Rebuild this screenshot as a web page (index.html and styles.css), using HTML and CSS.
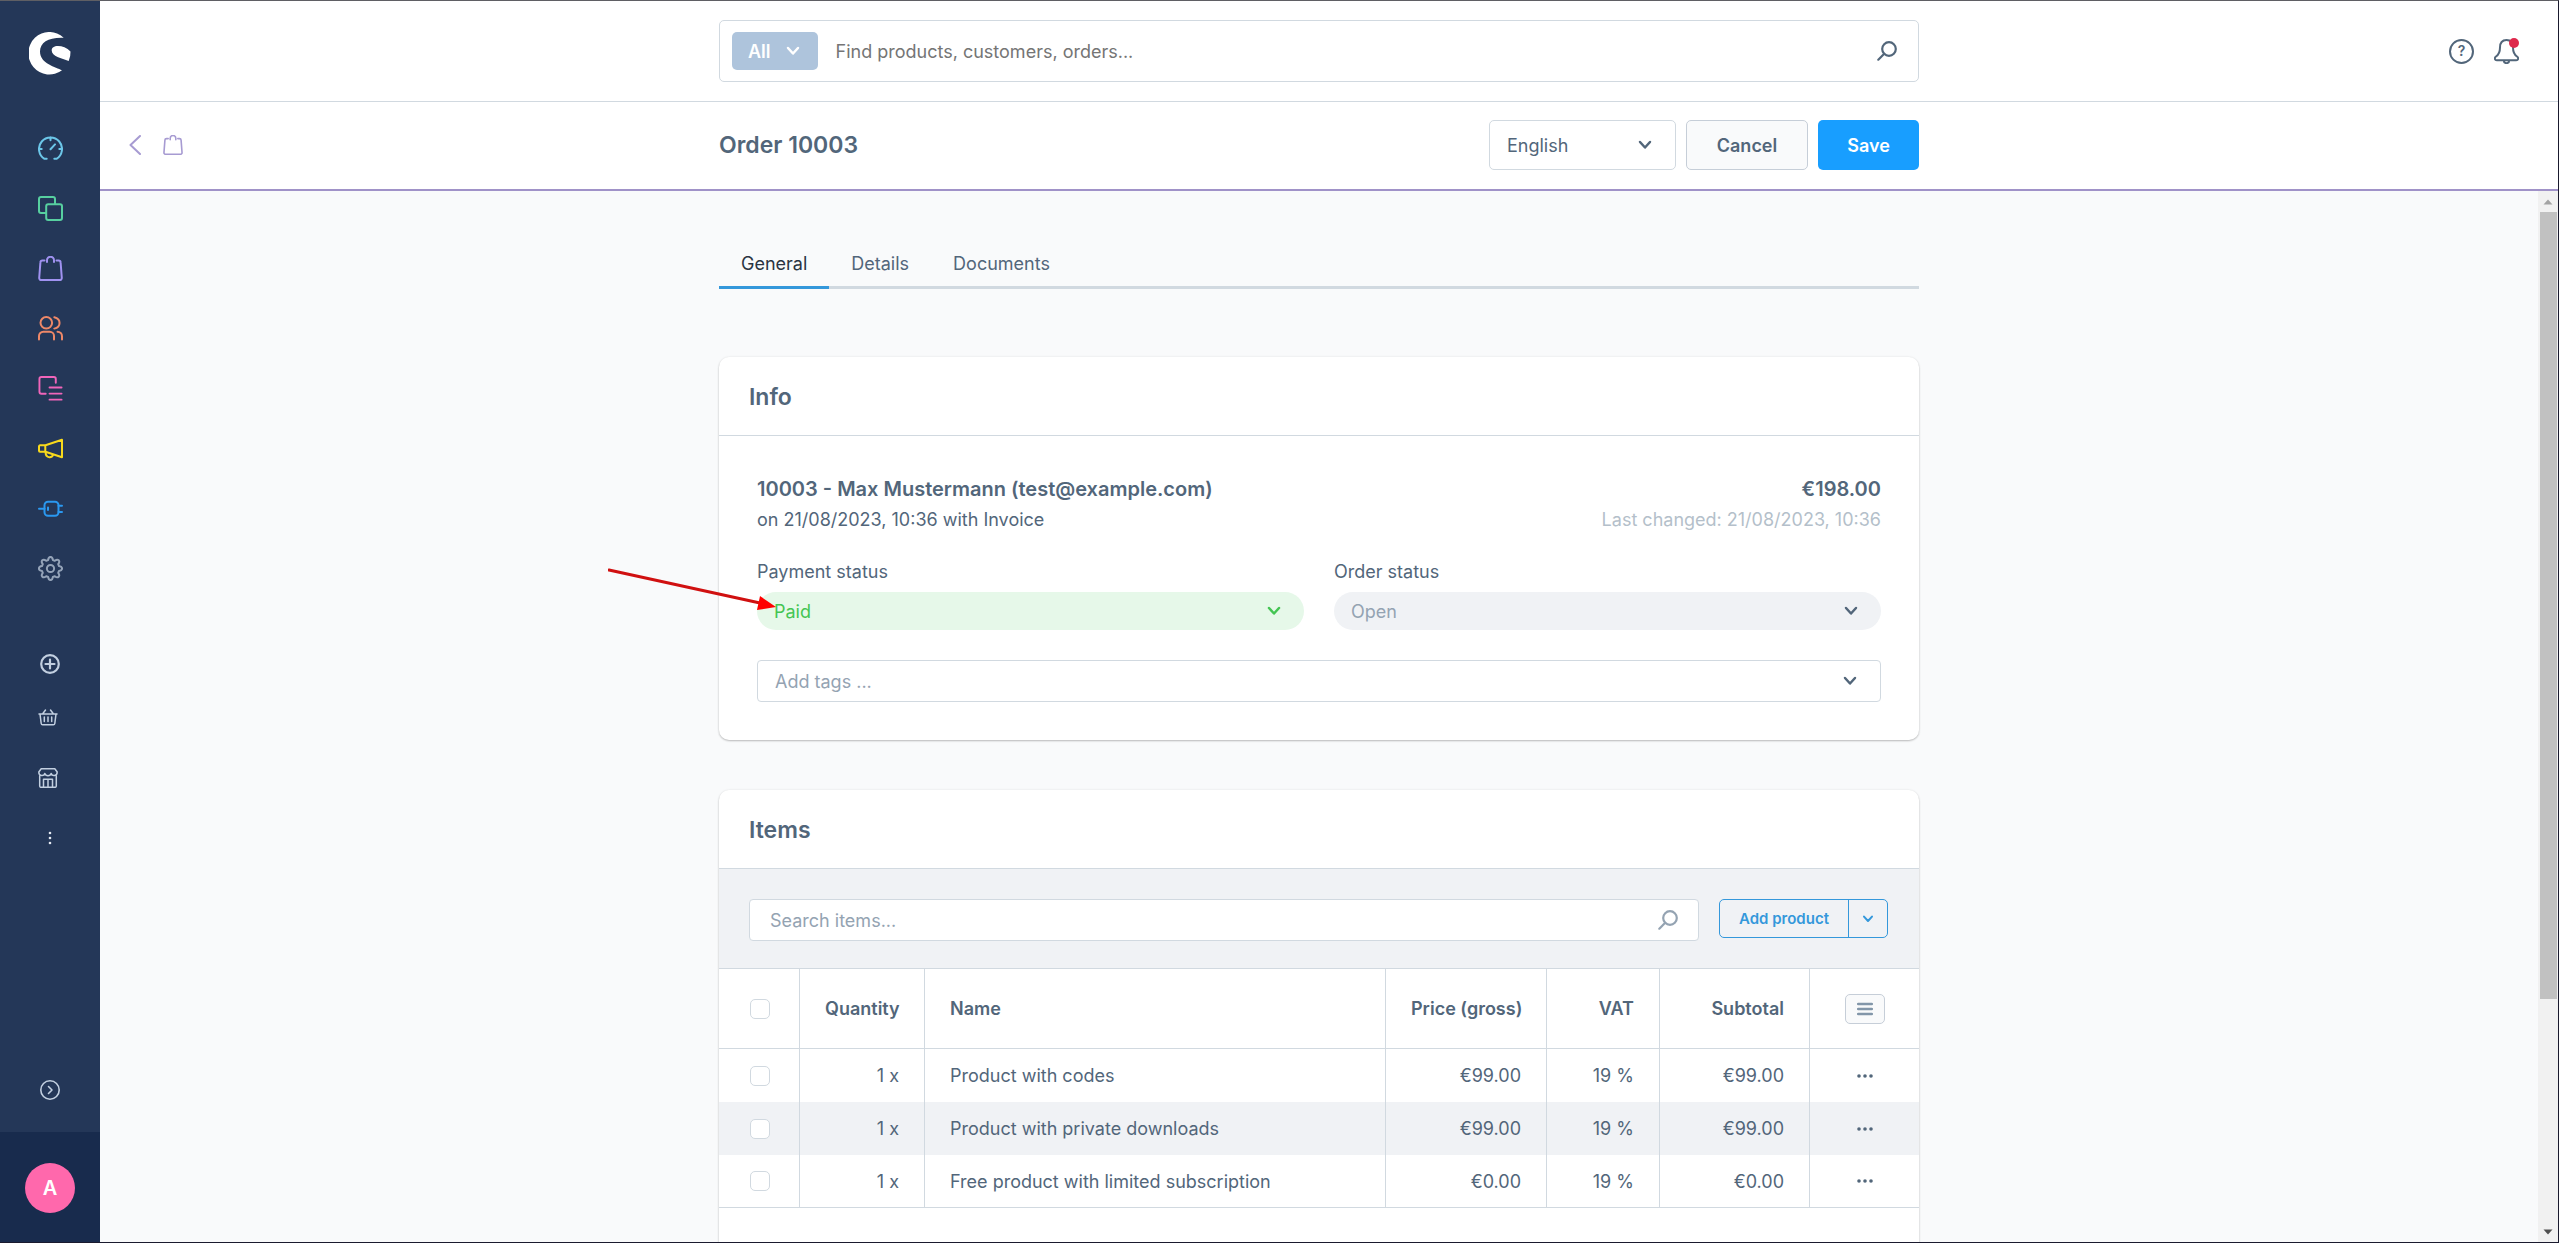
FILE: index.html
```html
<!DOCTYPE html>
<html lang="en">
<head>
    <meta charset="UTF-8">
    <meta name="viewport" content="width=device-width, initial-scale=1.0">
    <title>Order 10003</title>
    <link rel="stylesheet" href="styles.css">
</head>
<body>
    <!-- shared icons -->
    <svg class="sprite" aria-hidden="true">
        <symbol id="chevron" viewBox="0 0 14 10"><path d="M2 2l5 5.5L12 2"/></symbol>
        <symbol id="search" viewBox="0 0 20 20"><circle cx="12" cy="8" r="6.8"/><path d="M7.2 12.8L1.3 18.7"/></symbol>
        <symbol id="bag" viewBox="0 0 25 25"><path d="M6.5 4.5H4.4a2 2 0 0 0-2 1.9L1.2 22a2 2 0 0 0 2 2.1h18.6a2 2 0 0 0 2-2.1L22.6 6.4a2 2 0 0 0-2-1.9h-2.1M9 6V4.2a3.4 3.4 0 0 1 7 0V6"/></symbol>
        <symbol id="dots" viewBox="0 0 16 4"><circle cx="2" cy="2" r="1.8"/><circle cx="8" cy="2" r="1.8"/><circle cx="14" cy="2" r="1.8"/></symbol>
    </svg>

    <aside class="sidebar">
        <a class="logo" href="#" aria-label="Home">
            <svg viewBox="0 0 42 43"><path d="M34.7 5.7A21 21.3 0 1 0 33 38.3C27 35 11 32 11 19.5 11 10 20 5 34.7 5.7z"/><path d="M41.5 19.5C38 15.8 33 14 29 14c-4 0-6.3 1.5-6.3 4.5 0 6 10 7.5 17 10.5a21 21 0 0 0 1.8-9.5z"/></svg>
        </a>
        <nav class="menu">
            <a class="dashboard" href="#" aria-label="Dashboard"><svg viewBox="0 0 25 25"><path d="M8.7 22.8H6.5a11.5 11.5 0 1 1 12 0h-2.2M12.5 1.5v2.7M1 13h2.7M21.3 13H24M12.5 13.2L17 8.4"/></svg></a>
            <a class="catalogues" href="#" aria-label="Catalogues"><svg viewBox="0 0 25 25"><path d="M8 17H3a2 2 0 0 1-2-2V3a2 2 0 0 1 2-2h12a2 2 0 0 1 2 2v5"/><rect x="8.2" y="8.2" width="15.8" height="15.8" rx="2"/></svg></a>
            <a class="orders" href="#" aria-label="Orders"><svg><use href="#bag"/></svg></a>
            <a class="customers" href="#" aria-label="Customers"><svg viewBox="0 0 25 25"><circle cx="8.3" cy="6.8" r="5.8"/><path d="M16.3 1.2c7 1.8 7 9.6 0 11.4M1 23.5V20a4.3 4.3 0 0 1 4.3-4.3h6.4A4.3 4.3 0 0 1 16 20v3.5M19.5 15.7A4.5 4.5 0 0 1 24 20.2v3.3"/></svg></a>
            <a class="contents" href="#" aria-label="Content"><svg viewBox="0 0 25 26"><path d="M18 7V3a2 2 0 0 0-2-2H3a2 2 0 0 0-2 2v13.5a2 2 0 0 0 2 2h4.5M11.5 12H24M11.5 18.3H24M11.5 24.6H24"/></svg></a>
            <a class="marketing" href="#" aria-label="Marketing"><svg viewBox="0 0 25 25"><path d="M2 9.3h5.5L24 3.7v17.5L7.5 15.8H2a1 1 0 0 1-1-1v-4.5a1 1 0 0 1 1-1zM7.3 9.3v6.5M7.5 16.2c.3 6.5 7.3 6 7.5 2.2"/></svg></a>
            <a class="extensions" href="#" aria-label="Extensions"><svg viewBox="0 0 25 25"><path d="M1 12.8h5.5M20.5 9.7H24M20.5 16H24M10 11.6v2.4"/><rect x="6.5" y="5.8" width="14" height="14" rx="3.5"/></svg></a>
            <a class="settings" href="#" aria-label="Settings"><svg viewBox="-12.5 -12.5 25 25"><path d="M-2.4-8.5C-1.8-12.6 1.8-12.6 2.4-8.5L4.3-7.7C7.6-10.2 10.2-7.6 7.7-4.3L8.5-2.4C12.6-1.8 12.6 1.8 8.5 2.4L7.7 4.3C10.2 7.6 7.6 10.2 4.3 7.7L2.4 8.5C1.8 12.6-1.8 12.6-2.4 8.5L-4.3 7.7C-7.6 10.2-10.2 7.6-7.7 4.3L-8.5 2.4C-12.6 1.8-12.6-1.8-8.5-2.4L-7.7-4.3C-10.2-7.6-7.6-10.2-4.3-7.7z"/><circle r="3.6"/></svg></a>
        </nav>
        <nav class="shortcuts">
            <a href="#" aria-label="Add sales channel"><svg viewBox="0 0 20 20"><g class="thick"><circle cx="10" cy="10" r="8.8"/><path d="M10 5.5v9M5.5 10h9"/></g></svg></a>
            <a href="#" aria-label="Headless"><svg viewBox="0 0 20 20"><path d="M1 6h18M2 6l1.2 9.5a1.5 1.5 0 0 0 1.500 1.3h10.600a1.5 1.5 0 0 0 1.500-1.300L18 6M7.500 2L4.500 6M12.500 2l3 4M6.300 9v4.500M10 9v4.500M13.700 9v4.500"/></svg></a>
            <a href="#" aria-label="Storefront"><svg viewBox="0 0 20 20"><path d="M1.700 7.500V18a1.300 1.300 0 0 0 1.300 1.300h14a1.300 1.300 0 0 0 1.300-1.300V7.500M3.200.8h13.600L19.200 4c0 4.500-5 4.500-6 1.500-1 3-5.400 3-6.400 0-1 3-6 3-6-1.500zM5.500 19v-7.800h9V19M10 11.200V19"/></svg></a>
            <a class="more" href="#" aria-label="More"><svg viewBox="0 0 4 14"><circle cx="2" cy="2" r="1.3"/><circle cx="2" cy="7" r="1.3"/><circle cx="2" cy="12" r="1.3"/></svg></a>
        </nav>
        <button class="expand" aria-label="Expand menu"><svg viewBox="0 0 20 20"><circle cx="10" cy="10" r="9.2"/><path d="M8.5 6.5L12 10l-3.500 3.500"/></svg></button>
        <div class="user"><button class="avatar">A</button></div>
    </aside>

    <div class="page">
        <header class="topbar">
            <form class="global-search">
                <button type="button" class="scope">All <svg><use href="#chevron"/></svg></button>
                <input type="text" aria-label="Search" placeholder="Find products, customers, orders...">
                <svg class="search-icon"><use href="#search"/></svg>
            </form>
            <div class="topbar-actions">
                <button class="help" aria-label="Help">?</button>
                <button class="bell" aria-label="Notifications">
                    <svg viewBox="0 0 25 25"><path d="M12.500 1C8 1 6 4 6 8.500c0 5-1 7-4 9-2 1.500-1.200 3.700.8 3.700h19.400c2 0 2.800-2.200.8-3.700-3-2-4-4-4-9C19 4 17 1 12.500 1zM9.800 21.500c0 3.500 5.400 3.500 5.400 0"/></svg>
                    <span class="unread"></span>
                </button>
            </div>
        </header>

        <header class="page-head">
            <div class="back">
                <a href="#" aria-label="Back"><svg class="back-arrow" viewBox="0 0 12 20"><path d="M11 1L1.500 10 11 19"/></svg></a>
                <svg class="back-bag"><use href="#bag"/></svg>
            </div>
            <div class="head-main">
                <h1>Order 10003</h1>
                <div class="select language">
                    <select aria-label="Language"><option>English</option></select>
                    <svg><use href="#chevron"/></svg>
                </div>
                <button class="btn cancel">Cancel</button>
                <button class="btn save">Save</button>
            </div>
        </header>

        <div class="scroller">
            <main class="content">
                <nav class="tabs">
                    <a class="active" href="#">General</a>
                    <a href="#">Details</a>
                    <a href="#">Documents</a>
                </nav>

                <section class="card">
                    <h2>Info</h2>
                    <div class="info">
                        <div class="info-row customer">
                            <strong>10003 - Max Mustermann (test@example.com)</strong>
                            <strong>€198.00</strong>
                        </div>
                        <div class="info-row meta">
                            <span>on 21/08/2023, 10:36 with Invoice</span>
                            <span class="changed">Last changed: 21/08/2023, 10:36</span>
                        </div>
                        <div class="states">
                            <div>
                                <label for="payment">Payment status</label>
                                <div class="select state paid">
                                    <select id="payment"><option>Paid</option></select>
                                    <svg><use href="#chevron"/></svg>
                                </div>
                            </div>
                            <div>
                                <label for="order">Order status</label>
                                <div class="select state">
                                    <select id="order"><option>Open</option></select>
                                    <svg><use href="#chevron"/></svg>
                                </div>
                            </div>
                        </div>
                        <div class="select tags">
                            <input type="text" aria-label="Tags" placeholder="Add tags ...">
                            <svg><use href="#chevron"/></svg>
                        </div>
                    </div>
                    <svg class="pointer" viewBox="0 0 168 44"><path class="shaft" d="M1 3L152 36"/><path class="tip" d="M152 29L168 40 149 43z"/></svg>
                </section>

                <section class="card">
                    <h2>Items</h2>
                    <div class="toolbar">
                        <div class="item-search">
                            <input type="text" aria-label="Search items" placeholder="Search items...">
                            <svg class="search-icon"><use href="#search"/></svg>
                        </div>
                        <div class="add">
                            <button>Add product</button>
                            <button class="add-more" aria-label="More options"><svg><use href="#chevron"/></svg></button>
                        </div>
                    </div>
                    <table>
                        <thead>
                            <tr>
                                <th class="check"><input type="checkbox" aria-label="Select all"></th>
                                <th class="quantity num">Quantity</th>
                                <th>Name</th>
                                <th class="price num">Price (gross)</th>
                                <th class="vat num">VAT</th>
                                <th class="subtotal num">Subtotal</th>
                                <th class="actions"><button class="columns" aria-label="Columns"><svg viewBox="0 0 16 14"><path d="M1.200 2h13.600M1.200 7h13.600M1.200 12h13.600"/></svg></button></th>
                            </tr>
                        </thead>
                        <tbody>
                            <tr>
                                <td class="check"><input type="checkbox" aria-label="Select Product with codes"></td>
                                <td class="num">1 x</td>
                                <td>Product with codes</td>
                                <td class="num">€99.00</td>
                                <td class="num">19 %</td>
                                <td class="num">€99.00</td>
                                <td class="actions"><button aria-label="Actions"><svg><use href="#dots"/></svg></button></td>
                            </tr>
                            <tr>
                                <td class="check"><input type="checkbox" aria-label="Select Product with private downloads"></td>
                                <td class="num">1 x</td>
                                <td>Product with private downloads</td>
                                <td class="num">€99.00</td>
                                <td class="num">19 %</td>
                                <td class="num">€99.00</td>
                                <td class="actions"><button aria-label="Actions"><svg><use href="#dots"/></svg></button></td>
                            </tr>
                            <tr>
                                <td class="check"><input type="checkbox" aria-label="Select Free product with limited subscription"></td>
                                <td class="num">1 x</td>
                                <td>Free product with limited subscription</td>
                                <td class="num">€0.00</td>
                                <td class="num">19 %</td>
                                <td class="num">€0.00</td>
                                <td class="actions"><button aria-label="Actions"><svg><use href="#dots"/></svg></button></td>
                            </tr>
                        </tbody>
                    </table>
                    <div class="totals"></div>
                </section>
            </main>
            <div class="scrollbar">
                <svg viewBox="0 0 20 20"><path d="M5.500 13L10 8l4.500 5z" fill="#a3a3a3"/></svg>
                <div class="track"><div class="thumb"></div></div>
                <svg viewBox="0 0 20 20"><path d="M5.500 8L10 13l4.500-5z" fill="#505050"/></svg>
            </div>
        </div>
    </div>
</body>
</html>
```

FILE: styles.css
```css
* {
    box-sizing: border-box;
}
body {
    display: flex;
    height: 100vh;
    margin: 0;
    overflow: hidden;
    border: 1px solid #1a1a2e;
    border-top-color: #5f5f64;
    border-left: 0;
    background: #f9fafb;
    color: #52667a;
    font-family: Inter, "Liberation Sans", sans-serif;
    font-size: 18px;
}
a {
    color: inherit;
    text-decoration: none;
}
button, input, select {
    margin: 0;
    padding: 0;
    border: 0;
    background: none;
    color: inherit;
    font: inherit;
}
svg {
    display: block;
    fill: none;
    stroke: currentColor;
    stroke-width: 2;
    stroke-linecap: round;
    stroke-linejoin: round;
}
.sprite {
    position: absolute;
    width: 0;
    height: 0;
}

/* Sidebar */
.sidebar {
    display: flex;
    flex-direction: column;
    flex: none;
    width: 100px;
    background: #243758;
    color: #c2cfe0;
}
.logo {
    align-self: center;
    margin-top: 31px;
}
.logo svg {
    width: 42px;
    height: 43px;
    fill: #fff;
    stroke: none;
}
.menu {
    margin-top: 43px;
}
.menu a {
    display: flex;
    align-items: center;
    height: 60px;
    padding-left: 38px;
}
.menu svg {
    width: 25px;
    height: 25px;
}
.dashboard { color: #6cc6e8; }
.catalogues { color: #57d0a0; }
.orders { color: #a092f0; }
.customers { color: #ee8868; }
.contents { color: #f065ba; }
.marketing { color: #f8d91c; }
.extensions { color: #2a98f0; }
.settings { color: #94a3b8; }
.shortcuts {
    margin-top: 42px;
}
.shortcuts a {
    display: flex;
    align-items: center;
    height: 60px;
    padding-left: 38px;
}
.shortcuts a:first-child {
    height: 48px;
    padding-left: 40px;
}
.shortcuts svg {
    width: 20px;
    height: 20px;
    stroke-width: 1.5;
}
.shortcuts .thick {
    stroke-width: 2.2;
}
.shortcuts .more {
    padding-left: 48px;
}
.shortcuts .more svg {
    width: 4px;
    height: 14px;
    fill: #e4e9f2;
    stroke: none;
}
.expand {
    margin: auto auto 32px;
}
.expand svg {
    width: 20px;
    height: 20px;
    stroke-width: 1.6;
}
.user {
    display: flex;
    justify-content: center;
    padding: 31px 0 29px;
    background: #182b4d;
}
.avatar {
    width: 50px;
    height: 50px;
    border-radius: 50%;
    background: #ff68ac;
    color: #fff;
    font-size: 20px;
    font-weight: 600;
}

/* Headers */
.page {
    display: flex;
    flex-direction: column;
    flex: 1;
    min-width: 0;
}
.topbar, .page-head {
    display: grid;
    grid-template-columns: 1fr minmax(0, 1200px) 1fr;
    align-items: center;
    flex: none;
    padding-right: 20px;
    background: #fff;
}
.topbar {
    height: 101px;
    border-bottom: 1px solid #d1d9e0;
}
.global-search {
    display: flex;
    align-items: center;
    grid-column: 2;
    height: 62px;
    padding: 0 21px 0 12px;
    border: 1px solid #d1d9e0;
    border-radius: 5px;
}
.scope {
    display: flex;
    align-items: center;
    gap: 15px;
    height: 38px;
    padding: 0 18px 0 16px;
    border-radius: 5px;
    background: #aec4dc;
    color: #fff;
    font-weight: 600;
}
.scope svg {
    width: 14px;
    height: 10px;
    stroke-width: 2.5;
}
.global-search input {
    flex: 1;
    margin-left: 18px;
}
.global-search input::placeholder {
    color: #757575;
    opacity: 1;
}
.search-icon {
    width: 20px;
    height: 20px;
    stroke-width: 2.2;
}
.topbar-actions {
    display: flex;
    justify-content: flex-end;
    gap: 20px;
    padding-right: 19px;
}
.help {
    width: 25px;
    height: 25px;
    border: 2px solid #52667a;
    border-radius: 50%;
    font-size: 14px;
    font-weight: 600;
    line-height: 20px;
}
.bell {
    position: relative;
}
.bell svg {
    width: 25px;
    height: 25px;
}
.unread {
    position: absolute;
    top: -1px;
    right: 0;
    width: 10px;
    height: 10px;
    border-radius: 50%;
    background: #de294c;
}
.page-head {
    height: 89px;
    padding-bottom: 1px;
    border-bottom: 2px solid #a092c8;
}
.back {
    display: flex;
    align-items: center;
    gap: 22px;
    padding-left: 29px;
    color: #a79bd2;
}
.back-arrow {
    width: 12px;
    height: 20px;
}
.back-bag {
    width: 20px;
    height: 20px;
}
.head-main {
    display: flex;
    align-items: center;
    gap: 10px;
}
h1 {
    flex: 1;
    margin: 0;
    font-size: 23px;
    font-weight: 600;
}

/* Form controls */
.select {
    display: grid;
    align-items: center;
}
.select > * {
    grid-area: 1 / 1;
}
.select select, .select input {
    width: 100%;
    height: 100%;
    padding: 0 17px;
    appearance: none;
}
.select svg {
    justify-self: end;
    width: 14px;
    height: 10px;
    margin-right: 23px;
    stroke-width: 2.5;
    pointer-events: none;
}
.language {
    width: 187px;
    height: 50px;
    border: 1px solid #d1d9e0;
    border-radius: 5px;
}
.btn {
    height: 50px;
    border-radius: 5px;
    font-weight: 600;
}
.cancel {
    width: 122px;
    border: 1px solid #c6ced8;
    background: #f9fafb;
}
.save {
    width: 101px;
    background: #189eff;
    color: #fff;
}

/* Content */
.scroller {
    display: flex;
    flex: 1;
    min-height: 0;
}
.content {
    flex: 1;
    min-width: 0;
    padding-top: 50px;
    overflow: hidden;
}
.tabs {
    display: flex;
    max-width: 1200px;
    margin: 0 auto 68px;
    box-shadow: inset 0 -3px #d1d9e0;
}
.tabs a {
    padding: 0 22px;
    border-bottom: 3px solid transparent;
    line-height: 45px;
}
.tabs .active {
    border-color: #3498db;
    color: #2a3442;
}
.card {
    position: relative;
    max-width: 1200px;
    margin: 0 auto 50px;
    border-radius: 10px;
    background: #fff;
    box-shadow: 0 1px 2px rgba(0, 0, 0, 0.24), 0 0 3px rgba(0, 0, 0, 0.06);
}
h2 {
    height: 79px;
    margin: 0;
    padding: 0 30px;
    border-bottom: 1px solid #d1d9e0;
    font-size: 23px;
    font-weight: 600;
    line-height: 81px;
}
.info {
    padding: 38px;
}
.info-row {
    display: flex;
    justify-content: space-between;
}
.customer {
    font-size: 20px;
    line-height: 30px;
}
.customer strong {
    font-weight: 600;
}
.meta {
    line-height: 32px;
}
.changed {
    color: #b4bfca;
}
.states {
    display: grid;
    grid-template-columns: 1fr 1fr;
    gap: 30px;
    margin: 24px 0 30px;
}
.states label {
    display: block;
    margin-bottom: 8px;
    line-height: 24px;
}
.state {
    height: 38px;
    border-radius: 19px;
    background: #f0f2f5;
}
.state select {
    color: #94a3b2;
}
.paid {
    background: #e6f8e9;
    color: #44c553;
}
.paid select {
    color: #44c553;
}
.tags {
    height: 42px;
    border: 1px solid #d1d9e0;
    border-radius: 4px;
}
input::placeholder {
    color: #94a3b2;
    opacity: 1;
}

/* Red arrow that marks the payment status */
.pointer {
    position: absolute;
    top: 210px;
    left: -111px;
    width: 168px;
    height: 44px;
    pointer-events: none;
}
.shaft {
    stroke: #d01010;
    stroke-width: 3;
}
.tip {
    fill: #f00;
    stroke: none;
}

/* Items */
.toolbar {
    display: flex;
    gap: 20px;
    padding: 30px 31px 27px 30px;
    border-bottom: 1px solid #d1d9e0;
    background: #f0f2f5;
}
.item-search {
    display: flex;
    align-items: center;
    flex: 1;
    height: 42px;
    padding: 0 20px;
    border: 1px solid #d1d9e0;
    border-radius: 4px;
    background: #fff;
    color: #94a3b2;
}
.item-search input {
    flex: 1;
}
.add {
    display: flex;
    height: 39px;
    border: 1px solid #3498db;
    border-radius: 5px;
    color: #3498db;
}
.add button {
    width: 128px;
    font-size: 15px;
    font-weight: 600;
}
.add .add-more {
    width: 39px;
    border-left: 1px solid #3498db;
}
.add svg {
    width: 12px;
    height: 8px;
    margin: auto;
    stroke-width: 2.5;
}
table {
    width: 100%;
    table-layout: fixed;
    border-collapse: separate;
    border-spacing: 0;
}
th, td {
    height: 53px;
    padding: 0 25px;
    border-left: 1px solid #d1d9e0;
    text-align: left;
    white-space: nowrap;
}
th {
    height: 80px;
    border-bottom: 1px solid #d1d9e0;
    font-weight: 600;
}
th:first-child, td:first-child {
    border-left: 0;
}
tbody tr:nth-child(even) {
    background: #f0f2f5;
}
tbody tr:last-child td {
    border-bottom: 1px solid #d1d9e0;
}
.num {
    text-align: right;
}
.check {
    width: 80px;
    padding: 0 0 0 31px;
}
.quantity { width: 125px; }
.price { width: 161px; }
.vat { width: 113px; }
.subtotal { width: 150px; }
.actions {
    width: 110px;
    padding: 0;
    text-align: center;
}
.check input {
    display: block;
    width: 20px;
    height: 20px;
    border: 1px solid #d1d9e0;
    border-radius: 5px;
    background: #fff;
    appearance: none;
}
.actions button {
    display: block;
    margin: auto;
}
td.actions svg {
    width: 16px;
    height: 4px;
    fill: currentColor;
    stroke: none;
}
.actions .columns {
    width: 40px;
    height: 30px;
    border: 1px solid #c6ced8;
    border-radius: 5px;
    background: #f9fafb;
    color: #8296a9;
}
.columns svg {
    width: 16px;
    height: 14px;
    margin: auto;
    stroke-width: 2.5;
}
.totals {
    height: 240px;
}

/* Scrollbar */
.scrollbar {
    display: flex;
    flex-direction: column;
    flex: none;
    width: 20px;
    background: #f1f1f1;
}
.scrollbar svg {
    width: 20px;
    height: 21px;
    stroke: none;
}
.track {
    flex: 1;
    padding: 0 1px 0 2px;
}
.thumb {
    height: 78%;
    background: #c1c1c1;
}
```
